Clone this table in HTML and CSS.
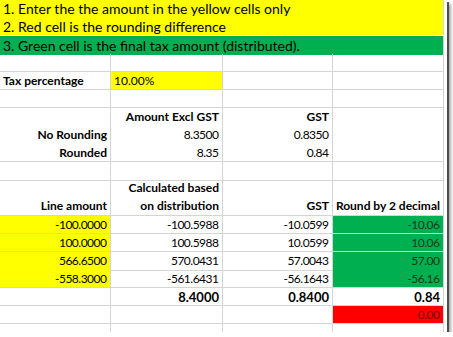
FILE: index.html
```html
<!DOCTYPE html>
<html>
<head>
<meta charset="utf-8">
<link rel="stylesheet" href="styles.css">
</head>
<body>
<div class="frame">
  <div class="sheet">
    <div class="cell span yellow r18">1. Enter the the amount in the yellow cells only</div>
    <div class="cell span yellow r17">2. Red cell is the rounding difference</div>
    <div class="cell span green r19">3. Green cell is the final tax amount (distributed).</div>

    <div class="cell"></div><div class="cell"></div><div class="cell"></div><div class="cell"></div>

    <div class="cell bold">Tax percentage</div><div class="cell yellow">10.00%</div><div class="cell"></div><div class="cell"></div>

    <div class="cell"></div><div class="cell"></div><div class="cell"></div><div class="cell"></div>

    <div class="cell nb"></div><div class="cell nb right bold">Amount Excl GST</div><div class="cell nb right bold">GST</div><div class="cell nb"></div>
    <div class="cell nb right bold">No Rounding</div><div class="cell nb right num">8.3500</div><div class="cell nb right num">0.8350</div><div class="cell nb"></div>
    <div class="cell right bold">Rounded</div><div class="cell right num">8.35</div><div class="cell right num">0.84</div><div class="cell"></div>

    <div class="cell r19"></div><div class="cell r19"></div><div class="cell r19"></div><div class="cell r19"></div>

    <div class="cell tall right bold">Line amount</div><div class="cell tall right bold">Calculated based<br>on distribution</div><div class="cell tall right bold">GST</div><div class="cell tall right bold">Round by 2 decimal</div>

    <div class="cell yellow right num">-100.0000</div><div class="cell right num">-100.5988</div><div class="cell right num">-10.0599</div><div class="cell green right num gtext">-10.06</div>
    <div class="cell yellow right num">100.0000</div><div class="cell right num">100.5988</div><div class="cell right num">10.0599</div><div class="cell green right num gtext">10.06</div>
    <div class="cell yellow right num r19">566.6500</div><div class="cell right num r19">570.0431</div><div class="cell right num r19">57.0043</div><div class="cell green right num gtext r19">57.00</div>
    <div class="cell yellow right num">-558.3000</div><div class="cell right num">-561.6431</div><div class="cell right num">-56.1643</div><div class="cell green right num gtext">-56.16</div>

    <div class="cell"></div><div class="cell right bold bnum">8.4000</div><div class="cell right bold bnum">0.8400</div><div class="cell right bold bnum">0.84</div>
    <div class="cell"></div><div class="cell"></div><div class="cell"></div><div class="cell red right num rtext">0.00</div>
    <div class="cell nb"></div><div class="cell nb"></div><div class="cell nb"></div><div class="cell nb"></div>
  </div>
</div>
</body>
</html>
```
FILE: styles.css
```css
html, body {
  margin: 0;
  padding: 0;
  background: #ffffff;
}

.frame {
  width: 447px;
  height: 332px;
  background: #ffffff;
  overflow: hidden;
  box-shadow: 2px 2px 0 rgba(60, 60, 60, 0.85), 4px 4px 3px rgba(0, 0, 0, 0.35);
}

.sheet {
  display: grid;
  grid-template-columns: 111px 112px 110px 111px;
  grid-auto-rows: 18px;
  font-family: Lato, "Open Sans", sans-serif;
  font-size: 12px;
  color: #000000;
}

.cell {
  box-sizing: border-box;
  border-right: 1px solid #d4d4d4;
  border-bottom: 1px solid #d4d4d4;
  padding: 0 3px;
  line-height: 18px;
  white-space: nowrap;
  overflow: hidden;
  display: flex;
  align-items: center;
}

.span {
  grid-column: 1 / -1;
  border-bottom: none;
  font-size: 14px;
}

.r17 { height: 17px; line-height: 17px; }
.r19 { height: 19px; }
.nb { border-bottom: none; }

.tall {
  grid-row: span 2;
  align-items: flex-end;
  line-height: 18px;
}

.right {
  justify-content: flex-end;
  text-align: right;
}

.bold { font-weight: 700; }

.num {
  font-size: 12px;
  letter-spacing: -0.5px;
  padding-right: 3.5px;
}

.bnum {
  font-size: 13px;
}

.yellow { background: #ffff00; }
.green { background: #00b050; }
.red { background: #ff0000; }

.gtext { color: #0b3a1c; }
.rtext { color: #7a0000; }
```
